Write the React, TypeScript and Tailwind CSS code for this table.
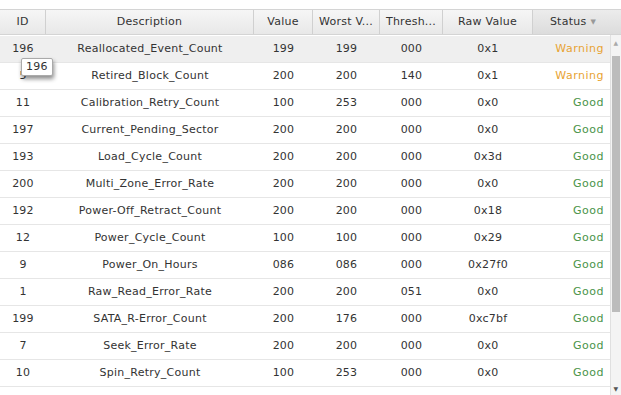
const cols = [
  { key: "id", label: "ID", w: "w-[46px]" },
  { key: "desc", label: "Description", w: "w-[208px]" },
  { key: "value", label: "Value", w: "w-[59px]" },
  { key: "worst", label: "Worst V...", w: "w-[67px]" },
  { key: "thresh", label: "Thresh...", w: "w-[63px]" },
  { key: "raw", label: "Raw Value", w: "w-[90px]" },
];

const rows = [
  ["196", "Reallocated_Event_Count", "199", "199", "000", "0x1", "Warning"],
  ["5", "Retired_Block_Count", "200", "200", "140", "0x1", "Warning"],
  ["11", "Calibration_Retry_Count", "100", "253", "000", "0x0", "Good"],
  ["197", "Current_Pending_Sector", "200", "200", "000", "0x0", "Good"],
  ["193", "Load_Cycle_Count", "200", "200", "000", "0x3d", "Good"],
  ["200", "Multi_Zone_Error_Rate", "200", "200", "000", "0x0", "Good"],
  ["192", "Power-Off_Retract_Count", "200", "200", "000", "0x18", "Good"],
  ["12", "Power_Cycle_Count", "100", "100", "000", "0x29", "Good"],
  ["9", "Power_On_Hours", "086", "086", "000", "0x27f0", "Good"],
  ["1", "Raw_Read_Error_Rate", "200", "200", "051", "0x0", "Good"],
  ["199", "SATA_R-Error_Count", "200", "176", "000", "0xc7bf", "Good"],
  ["7", "Seek_Error_Rate", "200", "200", "000", "0x0", "Good"],
  ["10", "Spin_Retry_Count", "100", "253", "000", "0x0", "Good"],
  ["3", "Spin_Up_Time", "100", "253", "021", "0x0", "Good"],
];

export default function App() {
  return (
    <div
      className="relative h-[395px] w-[621px] overflow-hidden bg-white pt-[9px] text-[11px] tracking-[0.25px] text-[#333]"
      style={{ fontFamily: "Tahoma, 'DejaVu Sans', Verdana, sans-serif" }}
    >
      {/* HEADER */}
      <div className="flex h-[26px] border-y border-[#d4d4d4] bg-gradient-to-b from-[#f6f6f6] to-[#e8e8e8]">
        {cols.map((c) => (
          <div
            key={c.key}
            className={`${c.w} flex items-center justify-center border-r border-[#d0d0d0] pt-[1px] text-[#333]`}
          >
            {c.label}
          </div>
        ))}
        <div className="flex flex-1 items-center justify-center gap-1 bg-gradient-to-b from-[#ececec] to-[#dcdcdc] pr-[8px] pt-[1px]">
          Status
          <span className="text-[7px] text-[#999]">▼</span>
        </div>
      </div>

      {/* BODY */}
      <div className="flex">
        <div className="w-[610px] pt-[1px]">
          {rows.map((r, i) => (
            <div
              key={i}
              className={`flex h-[27px] items-center border-b border-[#e6e6e6] ${
                i === 0 ? "bg-[#efefef]" : "bg-white"
              }`}
            >
              <div className="w-[46px] text-center">{r[0]}</div>
              <div className="w-[208px] text-center">{r[1]}</div>
              <div className="w-[59px] text-center">{r[2]}</div>
              <div className="w-[67px] text-center">{r[3]}</div>
              <div className="w-[63px] text-center">{r[4]}</div>
              <div className="w-[90px] text-center">{r[5]}</div>
              <div
                className={`flex-1 pr-[6px] text-right tracking-[0.5px] ${
                  r[6] === "Warning" ? "text-[#e8a332]" : "text-[#4a944a]"
                }`}
              >
                {r[6]}
              </div>
            </div>
          ))}
        </div>

        {/* SCROLLBAR */}
        <div className="flex h-[360px] w-[11px] flex-col border-l border-[#e0e0e0] bg-[#f4f4f4]">
          <div className="flex h-[21px] items-start justify-center pt-[5px] text-[6px] leading-none text-[#aaa]">
            ▲
          </div>
          <div className="mx-[1px] h-[256px] bg-[#bcbcbc]" />
          <div className="flex-1" />
          <div className="flex h-[12px] items-center justify-center text-[6px] leading-none text-[#555]">
            ▼
          </div>
        </div>
      </div>

      {/* TOOLTIP */}
      <div className="absolute left-[21px] top-[58px] rounded-[2px] border border-[#aaa] bg-white px-[4px] leading-[16px] text-[#333] shadow-[1px_3px_4px_rgba(0,0,0,0.45)]">
        196
      </div>
    </div>
  );
}
